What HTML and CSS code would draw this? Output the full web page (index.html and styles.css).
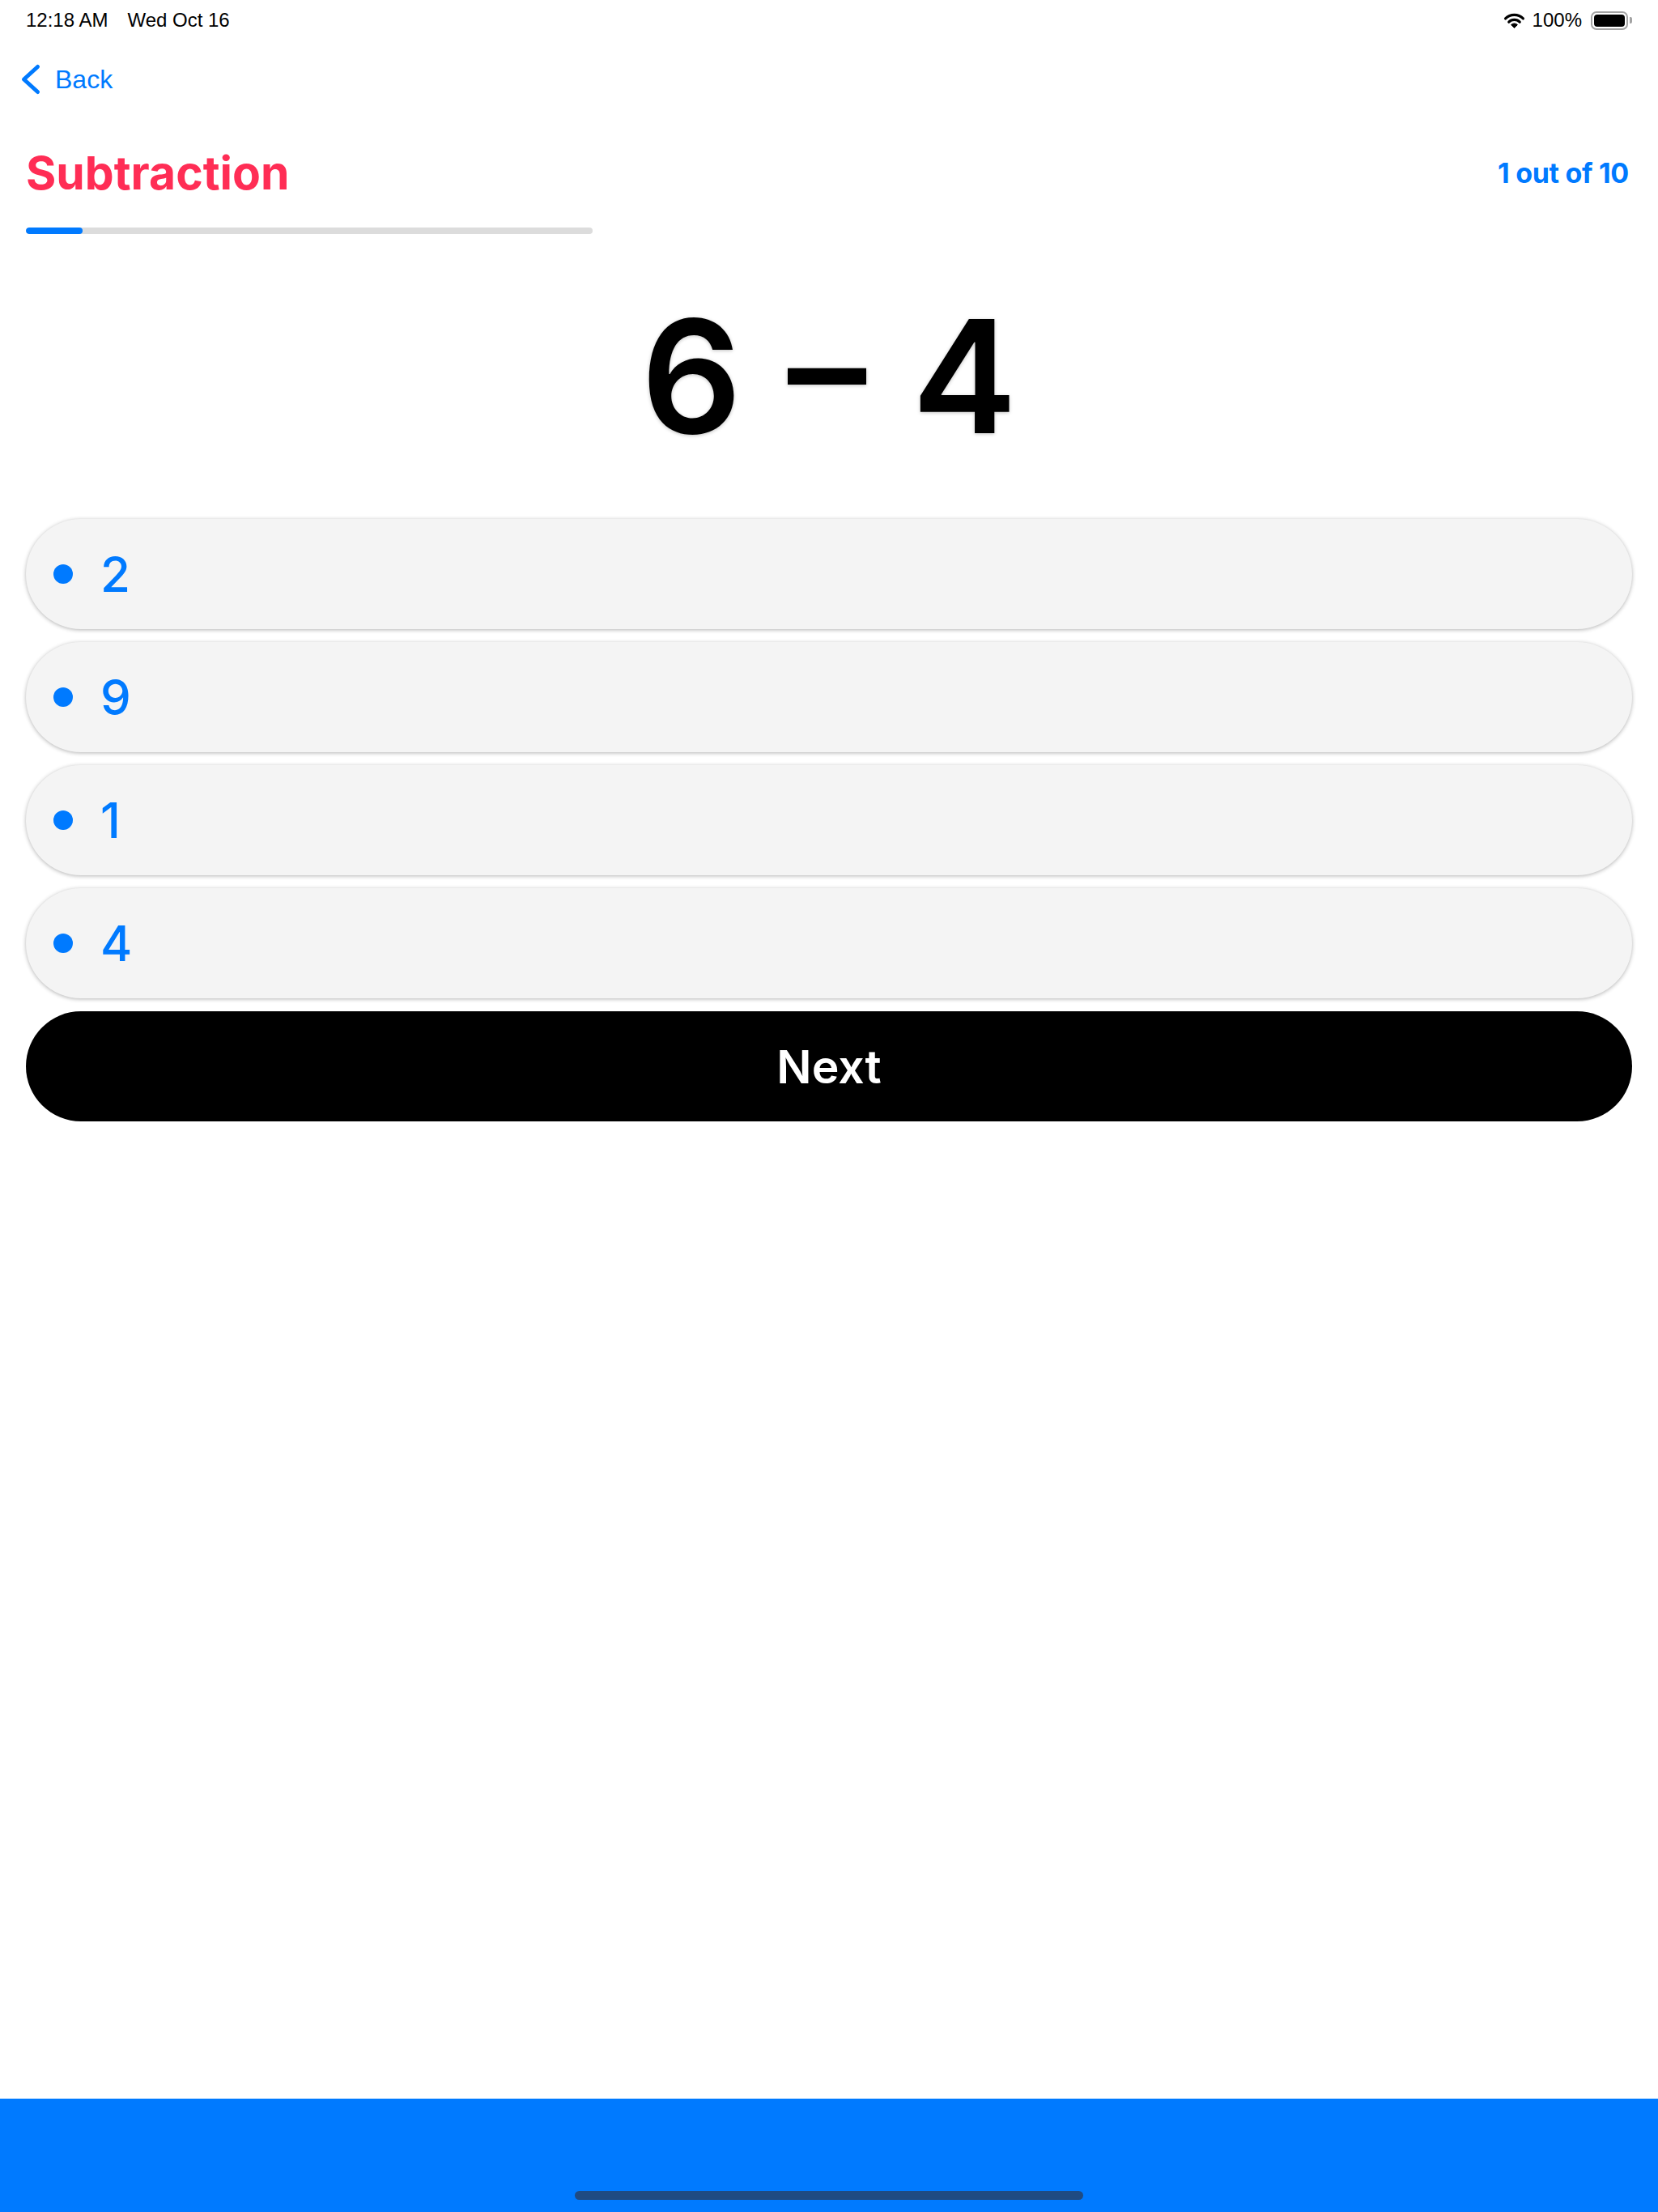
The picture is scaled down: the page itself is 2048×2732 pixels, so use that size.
FILE: index.html
```html
<!DOCTYPE html>
<html lang="en">
<head>
    <meta charset="UTF-8">
    <meta name="viewport" content="width=device-width, initial-scale=1.0">
    <title>Subtraction</title>
    <link rel="stylesheet" href="styles.css">
</head>
<body>

    <div class="screen">
        <div class="status-bar">
            <div class="status-left">
                <span>12:18 AM</span>
                <span>Wed Oct 16</span>
            </div>
            <div class="status-right">
                <svg class="wifi" width="27" height="20" viewBox="0 0 27 20">
                    <path d="M2.6 7.9 A15.5 15.5 0 0 1 24.4 7.9" fill="none" stroke="#000" stroke-width="3.3" stroke-linecap="round"/>
                    <path d="M6.8 12.2 A9.5 9.5 0 0 1 20.2 12.2" fill="none" stroke="#000" stroke-width="3.3" stroke-linecap="round"/>
                    <path d="M13.5 19.5 L9.6 15.6 A5.5 5.5 0 0 1 17.4 15.6 Z" fill="#000" stroke="#000" stroke-width="1" stroke-linejoin="round"/>
                </svg>
                <span>100%</span>
                <div class="battery">
                    <div class="battery-body"><div class="battery-level"></div></div>
                    <div class="battery-nub"></div>
                </div>
            </div>
        </div>

        <div class="nav">
            <a href="javascript:void(0);" class="back-link">
                <svg width="28" height="40" viewBox="0 0 28 40">
                    <polyline points="22.5,4.5 5.5,20 22.5,35.5" fill="none" stroke="#007aff" stroke-width="5" stroke-linecap="round" stroke-linejoin="round"/>
                </svg>
                <span>Back</span>
            </a>
        </div>

        <div class="quiz">
            <div class="quiz-header">
                <h1 class="quiz-title">Subtraction</h1>
                <div class="quiz-count">1 out of 10</div>
            </div>
            <div class="progress">
                <div class="progress-fill" style="width: 10%;"></div>
            </div>

            <div class="question">6 – 4</div>

            <div class="answers">
                <div class="answer"><span class="dot"></span><span class="answer-text">2</span></div>
                <div class="answer"><span class="dot"></span><span class="answer-text">9</span></div>
                <div class="answer"><span class="dot"></span><span class="answer-text">1</span></div>
                <div class="answer"><span class="dot"></span><span class="answer-text">4</span></div>
                <button class="next-btn">Next</button>
            </div>
        </div>

        <div class="footer">
            <div class="home-indicator"></div>
        </div>
    </div>

</body>
</html>
```

FILE: styles.css
```css
body {
    margin: 0;
    font-family: "Liberation Sans", Arial, sans-serif;
    background-color: #fff;
    color: #000;
}

.screen {
    min-height: 100vh;
    display: flex;
    flex-direction: column;
}

/* status bar */
.status-bar {
    display: flex;
    justify-content: space-between;
    align-items: center;
    height: 46px;
    padding: 0 32px;
    box-sizing: border-box;
    font-size: 24px;
    line-height: 24px;
}

.status-left {
    display: flex;
    gap: 24px;
    padding-top: 4px;
}

.status-right {
    display: flex;
    align-items: center;
    padding-top: 4px;
}

.wifi {
    margin-right: 9px;
}

.battery {
    display: flex;
    align-items: center;
    margin-left: 11px;
}

.battery-body {
    width: 46px;
    height: 23px;
    box-sizing: border-box;
    border: 2px solid #a3a3a3;
    border-radius: 7px;
    padding: 2px;
}

.battery-level {
    width: 100%;
    height: 100%;
    background-color: #000;
    border-radius: 4px;
}

.battery-nub {
    width: 3px;
    height: 8px;
    margin-left: 2px;
    background-color: #a3a3a3;
    border-radius: 0 2px 2px 0;
}

/* back link */
.nav {
    padding: 32px 0 0 24px;
}

.back-link {
    display: inline-flex;
    align-items: center;
    gap: 16px;
    color: #007aff;
    text-decoration: none;
    font-size: 32px;
    line-height: 40px;
}

/* quiz */
.quiz {
    padding: 0 32px;
}

.quiz-header {
    display: flex;
    justify-content: space-between;
    align-items: center;
    margin-top: 60px;
    padding-right: 4px;
    font-family: Inter, "Liberation Sans", sans-serif;
}

.quiz-title {
    margin: 0;
    font-size: 57px;
    line-height: 64px;
    font-weight: 700;
    color: #ff2d55;
}

.quiz-count {
    font-size: 34px;
    line-height: 40px;
    font-weight: 700;
    letter-spacing: -0.3px;
    color: #007aff;
}

.progress {
    width: 700px;
    height: 8px;
    margin-top: 35px;
    background-color: #dcdcdc;
    border-radius: 4px;
    overflow: hidden;
}

.progress-fill {
    height: 100%;
    background-color: #007aff;
    border-radius: 4px;
}

.question {
    margin-top: 79px;
    text-align: center;
    font-family: Inter, "Liberation Sans", sans-serif;
    font-size: 194px;
    line-height: 194px;
    font-weight: 600;
    word-spacing: 8px;
    text-shadow: 0 1px 4px rgba(0, 0, 0, 0.25);
}

.answers {
    display: flex;
    flex-direction: column;
    gap: 16px;
    margin-top: 79px;
}

.answer {
    display: flex;
    align-items: center;
    height: 136px;
    padding-left: 34px;
    background-color: #f4f4f4;
    border-radius: 68px;
    box-shadow: 0 1px 5px rgba(0, 0, 0, 0.3);
    cursor: pointer;
}

.dot {
    width: 24px;
    height: 24px;
    border-radius: 50%;
    background-color: #007aff;
    margin-right: 34px;
}

.answer-text {
    font-family: Inter, "Liberation Sans", sans-serif;
    font-size: 60px;
    line-height: 60px;
    font-weight: 500;
    color: #007aff;
}

.next-btn {
    height: 136px;
    border: none;
    border-radius: 68px;
    background-color: #000;
    color: #fff;
    font-family: Inter, "Liberation Sans", sans-serif;
    font-size: 57px;
    font-weight: 600;
    cursor: pointer;
}

/* bottom bar */
.footer {
    margin-top: auto;
    height: 140px;
    background-color: #007aff;
    display: flex;
    justify-content: center;
    align-items: flex-end;
}

.home-indicator {
    width: 628px;
    height: 11px;
    margin-bottom: 15px;
    border-radius: 6px;
    background-color: #1f4b82;
}
```
